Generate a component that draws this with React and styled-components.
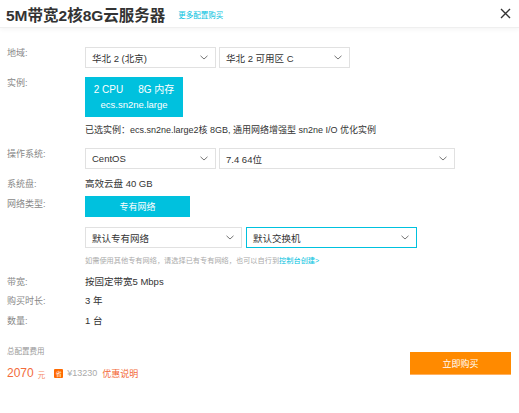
import React from 'react';
import styled, { createGlobalStyle } from 'styled-components';

const GlobalStyle = createGlobalStyle`
  html, body {
    margin: 0;
    padding: 0;
    background: #fff;
  }
  body {
    font-family: "Liberation Sans", "Noto Sans CJK SC", sans-serif;
    color: #333;
  }
`;

const Page = styled.div`
  width: 519px;
  height: 413px;
  background: #fff;
  display: flex;
  flex-direction: column;
  overflow: hidden;
`;

const Header = styled.header`
  height: 28px;
  display: flex;
  align-items: center;
  padding: 0 8px 0 6px;
  border-bottom: 1px solid #efefef;
  box-shadow: 0 2px 4px rgba(0, 0, 0, 0.04);
  box-sizing: border-box;
`;

const Title = styled.h1`
  margin: 0;
  font-size: 15.5px;
  font-weight: bold;
  color: #333;
`;

const MoreLink = styled.a`
  margin-left: 13px;
  margin-top: 2px;
  font-size: 7.5px;
  color: #00c1de;
  text-decoration: none;
`;

const CloseBtn = styled.button`
  margin-left: auto;
  border: none;
  background: none;
  padding: 0;
  width: 12px;
  height: 12px;
  display: flex;
  align-items: center;
  justify-content: center;
  cursor: pointer;
`;

const Body = styled.div`
  padding: 0 7px;
  display: flex;
  flex-direction: column;
`;

const Row = styled.div`
  display: grid;
  grid-template-columns: 78px 1fr;
  margin-top: ${(p) => p.$mt || 0}px;
`;

const Label = styled.div`
  font-size: 9px;
  line-height: 12px;
  color: #888;
  padding-top: ${(p) => p.$pt || 0}px;
`;

const Content = styled.div`
  display: flex;
  flex-direction: column;
  align-items: flex-start;
`;

const Value = styled.div`
  font-size: ${(p) => p.$fs || 9.5}px;
  line-height: 12px;
  color: #333;
  margin-top: ${(p) => p.$mt || 0}px;
`;

const SelectGroup = styled.div`
  display: flex;
  gap: ${(p) => p.$gap || 3}px;
  margin-top: ${(p) => p.$mt || 0}px;
`;

const SelectBox = styled.div`
  width: ${(p) => p.$w}px;
  height: 21px;
  box-sizing: border-box;
  border: 1px solid ${(p) => (p.$active ? '#00c1de' : '#e1e1e1')};
  background: #fff;
  display: flex;
  align-items: center;
  justify-content: space-between;
  padding: 0 7px 0 6px;
  font-size: 9.5px;
  color: #333;
`;

const InstanceCard = styled.div`
  width: 98px;
  height: 40px;
  background: #00c1de;
  color: #fff;
  display: flex;
  flex-direction: column;
  align-items: center;
  justify-content: center;
  gap: 3px;
  font-size: 9.5px;
`;

const SpecLine = styled.div`
  display: flex;
  align-items: baseline;
  gap: 15px;
  font-size: 10px;
  line-height: 12px;
`;

const BlueButton = styled.div`
  width: 105px;
  height: 21px;
  background: #00c1de;
  color: #fff;
  font-size: 9px;
  display: flex;
  align-items: center;
  justify-content: center;
`;

const Hint = styled.div`
  font-size: 7.2px;
  line-height: 10px;
  color: #aaa;
  margin-top: ${(p) => p.$mt || 0}px;
  a {
    color: #00c1de;
    text-decoration: none;
  }
`;

const Footer = styled.div`
  margin-top: auto;
  padding: 0 8px 33px 7px;
  display: flex;
  justify-content: space-between;
  align-items: flex-start;
`;

const PriceBlock = styled.div`
  display: flex;
  flex-direction: column;
`;

const TotalLabel = styled.div`
  font-size: 7.5px;
  line-height: 10px;
  color: #999;
`;

const PriceRow = styled.div`
  margin-top: 9px;
  display: flex;
  align-items: center;
  height: 14px;
`;

const Price = styled.span`
  font-size: 12px;
  color: #f36b3b;
`;

const Unit = styled.span`
  font-size: 7.5px;
  color: #f58a66;
  margin-left: 4px;
  margin-top: 2px;
`;

const SaveBadge = styled.span`
  margin-left: 9px;
  width: 9px;
  height: 9px;
  background: #ff6a00;
  color: #fff;
  font-size: 6px;
  display: inline-flex;
  align-items: center;
  justify-content: center;
  border-radius: 1px;
`;

const OldPrice = styled.span`
  margin-left: 4px;
  font-size: 9px;
  color: #aaa;
`;

const Discount = styled.a`
  margin-left: 5px;
  font-size: 9px;
  color: #f36b3b;
  text-decoration: none;
`;

const BuyButton = styled.button`
  margin-top: 5px;
  width: 101px;
  height: 23px;
  border: none;
  background: #ff8a00;
  color: #fff;
  font-family: inherit;
  font-size: 9px;
  cursor: pointer;
  border-bottom: 1px solid #ffb060;
`;

const Chevron = () => (
  <svg width="8" height="5" viewBox="0 0 8 5">
    <polyline points="0.5,0.8 4,4 7.5,0.8" fill="none" stroke="#666" strokeWidth="0.9" />
  </svg>
);

const Select = ({ w, active, children }) => (
  <SelectBox $w={w} $active={active}>
    <span>{children}</span>
    <Chevron />
  </SelectBox>
);

export default function App() {
  return (
    <Page>
      <GlobalStyle />
      <Header>
        <Title>5M带宽2核8G云服务器</Title>
        <MoreLink href="#">更多配置购买</MoreLink>
        <CloseBtn aria-label="close">
          <svg width="11" height="11" viewBox="0 0 11 11">
            <path d="M1 1 L10 10 M10 1 L1 10" stroke="#333" strokeWidth="1.4" />
          </svg>
        </CloseBtn>
      </Header>
      <Body>
        <Row $mt={19}>
          <Label>地域:</Label>
          <SelectGroup>
            <Select w={131}>华北 2 (北京)</Select>
            <Select w={131}>华北 2 可用区 C</Select>
          </SelectGroup>
        </Row>
        <Row $mt={9}>
          <Label>实例:</Label>
          <Content>
            <InstanceCard>
              <SpecLine>
                <span>2 CPU</span>
                <span>8G 内存</span>
              </SpecLine>
              <span>ecs.sn2ne.large</span>
            </InstanceCard>
            <Value $mt={7} $fs={9}>已选实例：ecs.sn2ne.large2核 8GB, 通用网络增强型 sn2ne I/O 优化实例</Value>
          </Content>
        </Row>
        <Row $mt={12}>
          <Label>操作系统:</Label>
          <SelectGroup>
            <Select w={131}>CentOS</Select>
            <Select w={236}>7.4 64位</Select>
          </SelectGroup>
        </Row>
        <Row $mt={9}>
          <Label>系统盘:</Label>
          <Value>高效云盘 40 GB</Value>
        </Row>
        <Row $mt={6}>
          <Label $pt={2}>网络类型:</Label>
          <Content>
            <BlueButton>专有网络</BlueButton>
            <SelectGroup $gap={4} $mt={10}>
              <Select w={157}>默认专有网络</Select>
              <Select w={171} active>默认交换机</Select>
            </SelectGroup>
            <Hint $mt={8}>
              如需使用其他专有网络，请选择已有专有网络，也可以自行到<a href="#">控制台创建&gt;</a>
            </Hint>
          </Content>
        </Row>
        <Row $mt={10}>
          <Label>带宽:</Label>
          <Value>按固定带宽5 Mbps</Value>
        </Row>
        <Row $mt={7}>
          <Label>购买时长:</Label>
          <Value>3 年</Value>
        </Row>
        <Row $mt={8}>
          <Label>数量:</Label>
          <Value>1 台</Value>
        </Row>
      </Body>
      <Footer>
        <PriceBlock>
          <TotalLabel>总配置费用</TotalLabel>
          <PriceRow>
            <Price>2070</Price>
            <Unit>元</Unit>
            <SaveBadge>省</SaveBadge>
            <OldPrice>¥13230</OldPrice>
            <Discount href="#">优惠说明</Discount>
          </PriceRow>
        </PriceBlock>
        <BuyButton>立即购买</BuyButton>
      </Footer>
    </Page>
  );
}
